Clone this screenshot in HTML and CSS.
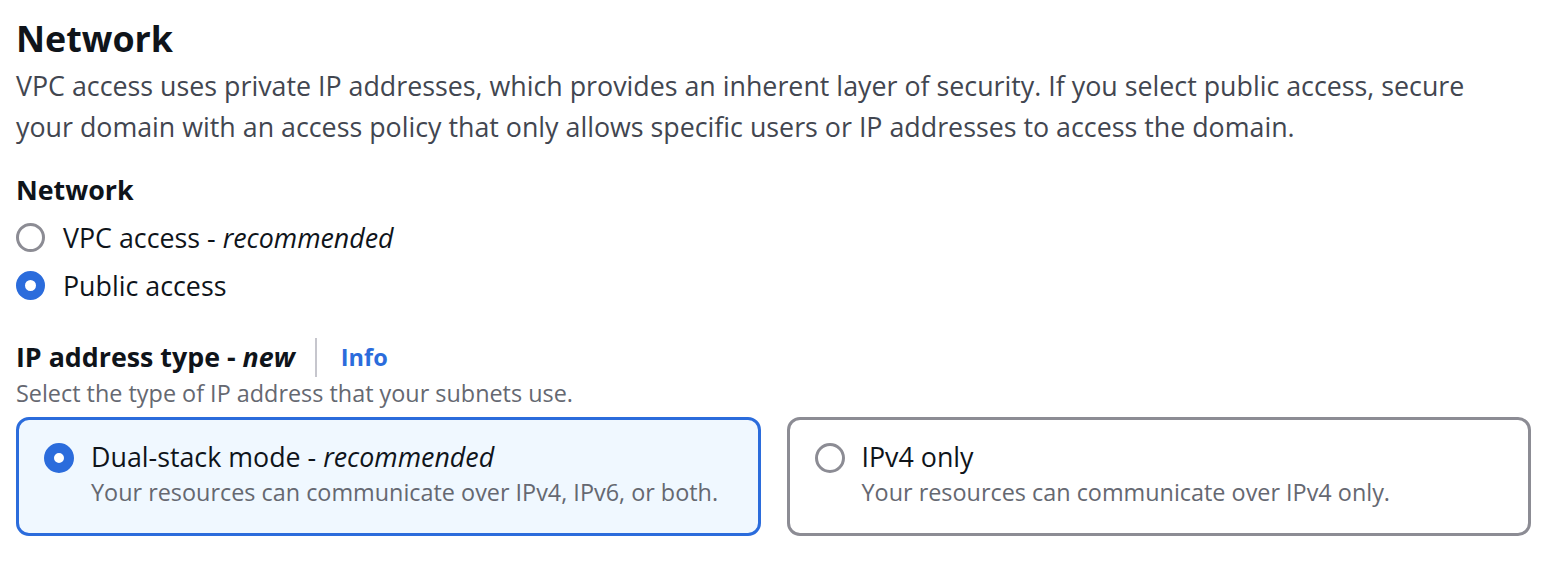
FILE: index.html
```html
<!DOCTYPE html>
<html lang="en">
<head>
<meta charset="utf-8">
<title>Network</title>
<link rel="stylesheet" href="styles.css">
</head>
<body>
<section class="page">
  <h2 class="title">Network</h2>
  <p class="desc">VPC access uses private IP addresses, which provides an inherent layer of security. If you select public access, secure your domain with an access policy that only allows specific users or IP addresses to access the domain.</p>

  <div class="field net">
    <div class="label">Network</div>
    <div class="radios">
      <label class="radio-row">
        <span class="radio"></span>
        <span class="radio-text">VPC access - <em>recommended</em></span>
      </label>
      <label class="radio-row">
        <span class="radio checked"></span>
        <span class="radio-text">Public access</span>
      </label>
    </div>
  </div>

  <div class="field ip">
    <div class="label-row">
      <span class="label">IP address type - <em>new</em></span>
      <span class="divider"></span>
      <a class="info" href="#">Info</a>
    </div>
    <div class="hint">Select the type of IP address that your subnets use.</div>
    <div class="tiles">
      <label class="tile selected">
        <span class="radio checked"></span>
        <span class="tile-body">
          <span class="tile-title">Dual-stack mode - <em>recommended</em></span>
          <span class="tile-desc">Your resources can communicate over IPv4, IPv6, or both.</span>
        </span>
      </label>
      <label class="tile">
        <span class="radio"></span>
        <span class="tile-body">
          <span class="tile-title">IPv4 only</span>
          <span class="tile-desc">Your resources can communicate over IPv4 only.</span>
        </span>
      </label>
    </div>
  </div>
</section>
</body>
</html>
```
FILE: styles.css
```css
html, body {
  margin: 0;
  padding: 0;
  background: #ffffff;
}

body {
  font-family: "Open Sans", "Noto Sans", sans-serif;
  color: #0f141a;
}

.page {
  width: 1515px;
  padding: 14px 0 0 16px;
}

.title {
  margin: 0;
  font-size: 35.8px;
  line-height: 48px;
  font-weight: 700;
  color: #0f141a;
  letter-spacing: 0;
}

.desc {
  max-width: 1490px;
  margin: 3px 0 0;
  font-size: 26.8px;
  line-height: 41px;
  color: #424650;
}

.field.net {
  margin-top: 22px;
}

.label {
  font-size: 26.8px;
  line-height: 41px;
  font-weight: 700;
  color: #0f141a;
}

.label em {
  font-style: italic;
}

.radios {
  display: flex;
  flex-direction: column;
  padding-top: 4px;
}

.radio-row {
  display: flex;
  align-items: flex-start;
  height: 48px;
  font-size: 26.8px;
  line-height: 48px;
  color: #0f141a;
}

.radio {
  flex: none;
  box-sizing: border-box;
  width: 29px;
  height: 29px;
  margin-top: 9px;
  border-radius: 50%;
  border: 3px solid #8c8c94;
  background: #ffffff;
}

.radio.checked {
  border: 9.5px solid #2b6cdc;
  background: #ffffff;
}

.radio-row .radio-text {
  margin-left: 18px;
}

.field.ip {
  margin-top: 29px;
}

.label-row {
  display: flex;
  align-items: center;
  height: 36px;
}

.label-row .label {
  line-height: 36px;
}

.divider {
  width: 2px;
  height: 39px;
  margin: 0 24px 0 20px;
  background: #c6c6cd;
}

.info {
  font-size: 23.5px;
  line-height: 36px;
  font-weight: 700;
  color: #2b6cdc;
  text-decoration: none;
}

.hint {
  margin-top: 3px;
  font-size: 23.4px;
  line-height: 30px;
  color: #656871;
}

.tiles {
  display: grid;
  grid-template-columns: 1fr 1fr;
  gap: 26px;
  margin-top: 9px;
}

.tile {
  display: flex;
  align-items: flex-start;
  box-sizing: border-box;
  height: 119px;
  padding: 17px 20px 0 25px;
  border: 3px solid #8c8c94;
  border-radius: 13px;
  background: #ffffff;
}

.tile.selected {
  border-color: #2b6cdc;
  background: #f0f8ff;
}

.tile .radio {
  width: 30px;
  height: 30px;
  margin-top: 6px;
}

.tile .radio.checked {
  border-width: 10px;
}

.tile-body {
  display: flex;
  flex-direction: column;
  margin-left: 17px;
}

.tile-title {
  font-size: 26.8px;
  line-height: 40px;
  color: #0f141a;
}

.tile-desc {
  font-size: 23.4px;
  line-height: 30px;
  color: #656871;
}
```
